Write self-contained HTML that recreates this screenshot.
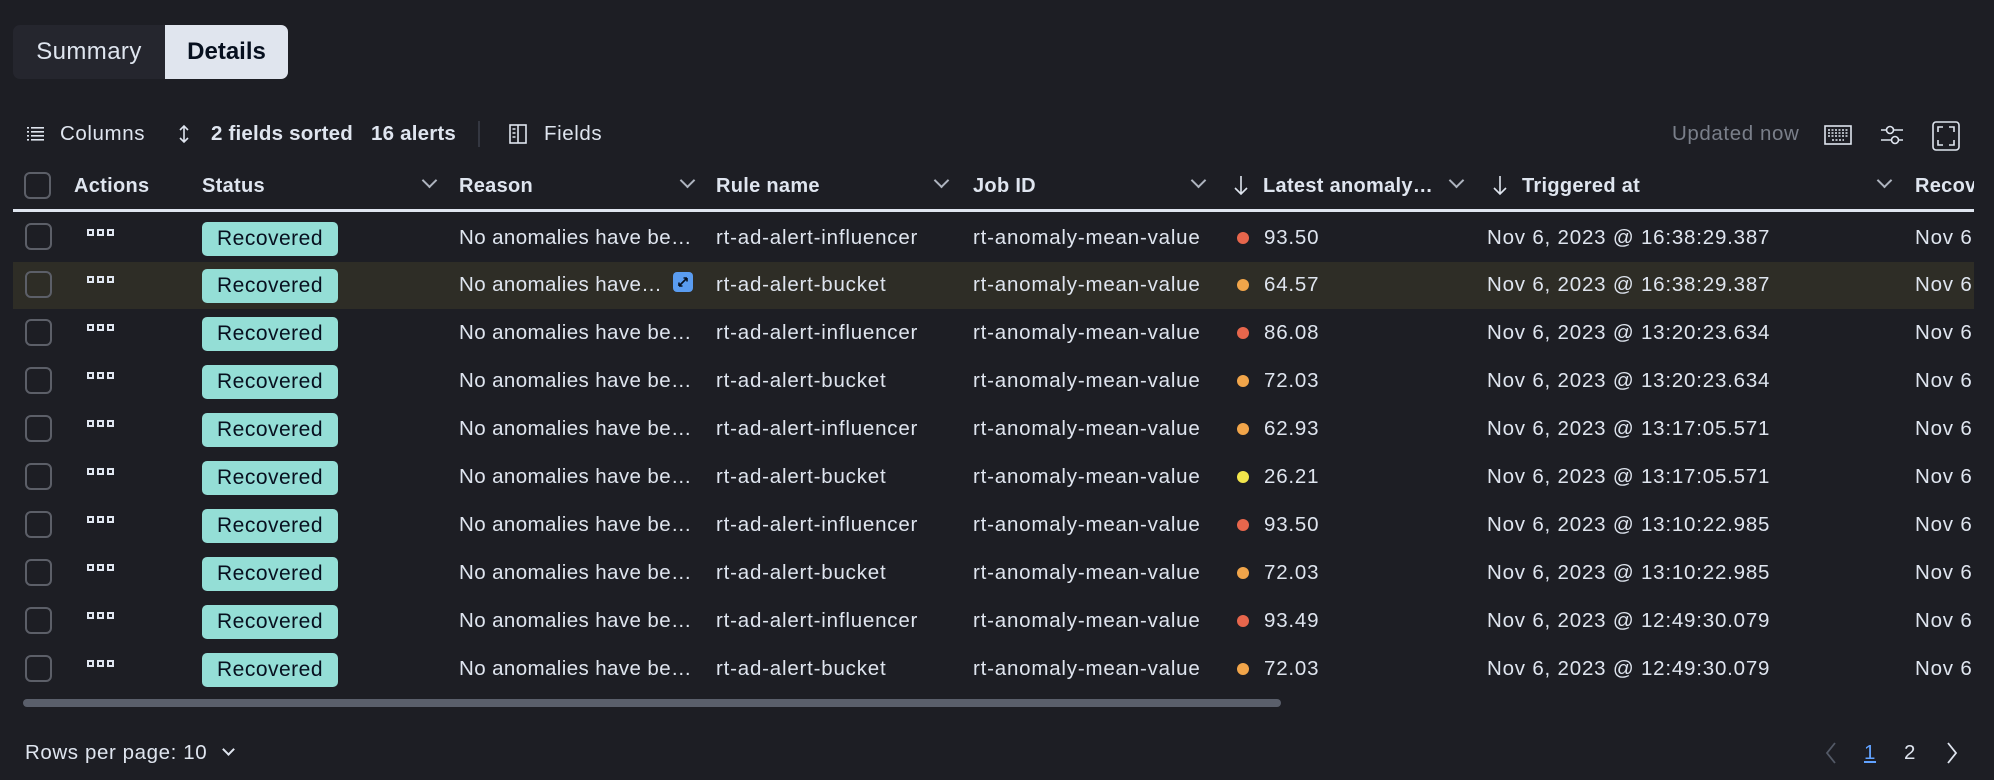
<!DOCTYPE html>
<html><head><meta charset="utf-8"><style>
*{margin:0;padding:0;box-sizing:border-box}
body{width:1994px;height:780px;background:#1d1e24;font-family:"Liberation Sans",sans-serif;color:#dfe5ef;position:relative;overflow:hidden}
.a{position:absolute;white-space:nowrap}
.tabs{left:13px;top:25px;width:275px;height:54px;border-radius:7px;background:#25262e;overflow:hidden}
.tabs .s{left:0;top:0;width:152px;height:54px;line-height:54px;text-align:center;font-size:24px;letter-spacing:.4px;color:#dfe5ef}
.tabs .d{left:152px;top:0;width:123px;height:54px;line-height:54px;text-align:center;font-size:24px;font-weight:bold;color:#07101f;background:#e0e5ee}
.tb{font-size:20.5px;letter-spacing:.6px;top:122px;line-height:24px}
.hd{font-size:20px;letter-spacing:.3px;font-weight:bold;top:174px;line-height:24px;color:#dfe5ef}
.chev{width:11px;height:11px;border-right:2px solid #aeb4bf;border-bottom:2px solid #aeb4bf;transform:rotate(45deg);top:175px}
.cell{font-size:20.5px;letter-spacing:.8px;line-height:24px;color:#dfe5ef}
.cb{width:27px;height:27px;border:2px solid #5c5f68;border-radius:6px}
.badge{width:136px;height:34px;background:#94ded6;border-radius:5px;color:#07101f;font-size:21px;letter-spacing:.5px;line-height:34px;text-align:center}
.dots{width:7px;height:7px;border:2px solid #dfe5ef}
.dot{width:12px;height:12px;border-radius:50%}
</style></head><body>
<div class="a tabs"><div class="a s">Summary</div><div class="a d">Details</div></div>

<svg class="a" style="left:27px;top:126px" width="18" height="16" viewBox="0 0 18 16" fill="#dfe5ef"><rect x="0" y="1" width="2" height="1.6"/><rect x="4" y="1" width="13" height="1.6"/><rect x="0" y="5" width="2" height="1.6"/><rect x="4" y="5" width="13" height="1.6"/><rect x="0" y="9" width="2" height="1.6"/><rect x="4" y="9" width="13" height="1.6"/><rect x="0" y="13" width="2" height="1.6"/><rect x="4" y="13" width="13" height="1.6"/></svg>
<div class="a tb" style="left:60px">Columns</div>
<svg class="a" style="left:178px;top:124px" width="12" height="20" viewBox="0 0 12 20" fill="none" stroke="#dfe5ef" stroke-width="1.6"><path d="M2 6L6 2L10 6M6 2V18M2 14L6 18L10 14"/></svg>
<div class="a tb" style="left:211px;font-weight:bold;letter-spacing:.2px">2 fields sorted</div>
<div class="a tb" style="left:371px;font-weight:bold;letter-spacing:.2px">16 alerts</div>
<div class="a" style="left:478px;top:121px;width:2px;height:26px;background:#343741"></div>
<svg class="a" style="left:509px;top:124px" width="18" height="20" viewBox="0 0 18 20" fill="none" stroke="#dfe5ef" stroke-width="1.6"><rect x="1" y="1" width="16" height="18"/><path d="M9 1V19M3.5 5H6.5M3.5 9H6.5M3.5 13H6.5"/></svg>
<div class="a tb" style="left:544px">Fields</div>
<div class="a tb" style="left:1672px;color:#7a7f8a">Updated now</div>
<svg class="a" style="left:1824px;top:125px" width="28" height="20" viewBox="0 0 28 20" fill="none" stroke="#dfe5ef" stroke-width="1.6"><rect x="1" y="1" width="26" height="18"/><path d="M4 5H24M4 8H24M4 11H24M8 15H20" stroke-dasharray="2 1.5"/></svg>
<svg class="a" style="left:1880px;top:124px" width="24" height="22" viewBox="0 0 24 22" fill="none" stroke="#dfe5ef" stroke-width="1.6"><path d="M1 6H6M14 6H23M1 16H11M19 16H23"/><circle cx="10" cy="6" r="3.5"/><circle cx="15" cy="16" r="3.5"/></svg>
<svg class="a" style="left:1932px;top:121px" width="28" height="30" viewBox="0 0 28 30" fill="none" stroke="#dfe5ef" stroke-width="1.6"><rect x="1" y="1" width="26" height="28" rx="3"/><path d="M6 11V6H11M17 6H22V11M22 19V24H17M11 24H6V19"/></svg>

<div class="a cb" style="left:24px;top:172px"></div>
<div class="a hd" style="left:74px">Actions</div>
<div class="a hd" style="left:202px">Status</div><div class="a chev" style="left:424px"></div>
<div class="a hd" style="left:459px">Reason</div><div class="a chev" style="left:682px"></div>
<div class="a hd" style="left:716px">Rule name</div><div class="a chev" style="left:936px"></div>
<div class="a hd" style="left:973px">Job ID</div><div class="a chev" style="left:1193px"></div>
<svg class="a" style="left:1233px;top:174px" width="16" height="22" viewBox="0 0 16 22" fill="none" stroke="#dfe5ef" stroke-width="1.6"><path d="M8 2V20M2 14L8 20L14 14"/></svg>
<div class="a hd" style="left:1263px">Latest anomaly…</div><div class="a chev" style="left:1451px"></div>
<svg class="a" style="left:1492px;top:174px" width="16" height="22" viewBox="0 0 16 22" fill="none" stroke="#dfe5ef" stroke-width="1.6"><path d="M8 2V20M2 14L8 20L14 14"/></svg>
<div class="a hd" style="left:1522px">Triggered at</div><div class="a chev" style="left:1879px"></div>
<div class="a hd" style="left:1915px;width:59px;overflow:hidden">Recovered</div>
<div class="a" style="left:13px;top:209px;width:1961px;height:3px;background:#dfe5ef"></div>

<div class="a" style="left:13px;top:262px;width:1961px;height:47px;background:#2e2d26"></div>
<div id="rows"></div>
<script>
var data=[
["No anomalies have be…","rt-ad-alert-influencer","#e7664c","93.50","Nov 6, 2023 @ 16:38:29.387"],
["No anomalies have…","rt-ad-alert-bucket","#f1a54a","64.57","Nov 6, 2023 @ 16:38:29.387"],
["No anomalies have be…","rt-ad-alert-influencer","#e7664c","86.08","Nov 6, 2023 @ 13:20:23.634"],
["No anomalies have be…","rt-ad-alert-bucket","#f1a54a","72.03","Nov 6, 2023 @ 13:20:23.634"],
["No anomalies have be…","rt-ad-alert-influencer","#f1a54a","62.93","Nov 6, 2023 @ 13:17:05.571"],
["No anomalies have be…","rt-ad-alert-bucket","#f3e64c","26.21","Nov 6, 2023 @ 13:17:05.571"],
["No anomalies have be…","rt-ad-alert-influencer","#e7664c","93.50","Nov 6, 2023 @ 13:10:22.985"],
["No anomalies have be…","rt-ad-alert-bucket","#f1a54a","72.03","Nov 6, 2023 @ 13:10:22.985"],
["No anomalies have be…","rt-ad-alert-influencer","#e7664c","93.49","Nov 6, 2023 @ 12:49:30.079"],
["No anomalies have be…","rt-ad-alert-bucket","#f1a54a","72.03","Nov 6, 2023 @ 12:49:30.079"]];
var h="";
for(var i=0;i<10;i++){var c=237.5+i*47.95,d=data[i],t=c-12;
h+='<div class="a cb" style="left:25px;top:'+(c-14.5)+'px"></div>';
for(var k=0;k<3;k++)h+='<div class="a dots" style="left:'+(87+k*10)+'px;top:'+(c-9)+'px"></div>';
h+='<div class="a badge" style="left:202px;top:'+(c-16)+'px">Recovered</div>';
h+='<div class="a cell" style="left:459px;top:'+t+'px;letter-spacing:.4px">'+d[0]+'</div>';
h+='<div class="a cell" style="left:716px;top:'+t+'px">'+d[1]+'</div>';
h+='<div class="a cell" style="left:973px;top:'+t+'px">rt-anomaly-mean-value</div>';
h+='<div class="a dot" style="left:1237px;top:'+(c-6)+'px;background:'+d[2]+'"></div>';
h+='<div class="a cell" style="left:1264px;top:'+t+'px">'+d[3]+'</div>';
h+='<div class="a cell" style="left:1487px;top:'+t+'px">'+d[4]+'</div>';
h+='<div class="a cell" style="left:1915px;top:'+t+'px;width:59px;overflow:hidden">Nov 6</div>';
}
document.getElementById('rows').innerHTML=h;
</script>
<svg class="a" style="left:673px;top:272px" width="20" height="20" viewBox="0 0 20 20"><rect width="20" height="20" rx="4" fill="#5a9cf0"/><path d="M6 14L14 6M6 14V10.5M6 14H9.5M14 6H10.5M14 6V9.5" stroke="#07101f" stroke-width="1.6" fill="none"/></svg>

<div class="a" style="left:23px;top:699px;width:1258px;height:8px;border-radius:4px;background:#5a5f6b"></div>

<div class="a tb" style="left:25px;top:741px">Rows per page: 10</div>
<div class="a" style="left:224px;top:745px;width:9px;height:9px;border-right:2px solid #dfe5ef;border-bottom:2px solid #dfe5ef;transform:rotate(45deg)"></div>
<svg class="a" style="left:1824px;top:741px" width="14" height="24" viewBox="0 0 14 24" fill="none" stroke="#535966" stroke-width="1.8"><path d="M11 2L3 12L11 22"/></svg>
<div class="a tb" style="left:1864px;top:741px;color:#61a2ff;text-decoration:underline">1</div>
<div class="a tb" style="left:1904px;top:741px">2</div>
<svg class="a" style="left:1945px;top:741px" width="14" height="24" viewBox="0 0 14 24" fill="none" stroke="#dfe5ef" stroke-width="1.8"><path d="M3 2L11 12L3 22"/></svg>
</body></html>
